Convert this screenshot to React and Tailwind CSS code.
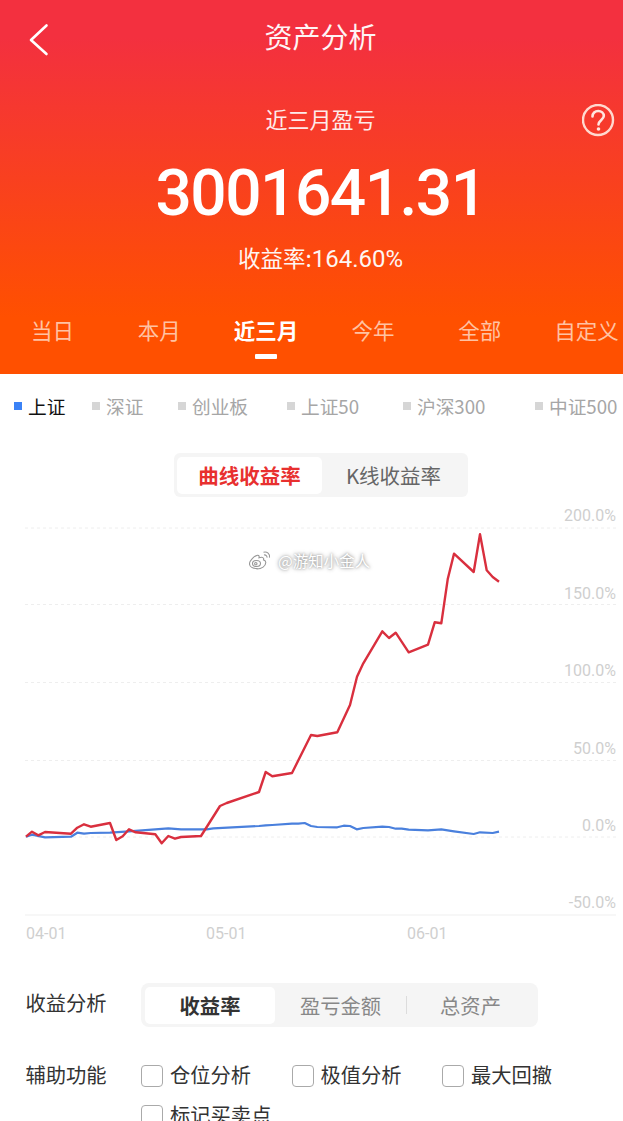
import React from "react";

const CJK = "font-['Noto_Sans_CJK_SC','Noto_Sans',sans-serif]";

const PERIODS = ["当日", "本月", "近三月", "今年", "全部", "自定义"];

// width of each slot keeps the markers spaced like the native scroller
const INDEXES = [
  { name: "上证", width: "w-[78px]", active: true },
  { name: "深证", width: "w-[86px]" },
  { name: "创业板", width: "w-[109px]" },
  { name: "上证50", width: "w-[116px]" },
  { name: "沪深300", width: "w-[132px]" },
  { name: "中证500", width: "w-[88px]" },
];

const GRID_Y = [528, 604.5, 682.5, 760.5, 837];
const Y_LABELS = [
  ["200.0%", 521],
  ["150.0%", 599],
  ["100.0%", 676],
  ["50.0%", 754],
  ["0.0%", 831],
  ["-50.0%", 908],
];
const X_LABELS = [
  ["04-01", 26],
  ["05-01", 206],
  ["06-01", 407],
];

const RED_LINE =
  "26,836.7 32,831.7 38.3,835.3 45,832 71,833.7 77.3,827.7 84,824.3 90.7,826.7 110,823 116.3,840 122.7,836.3 129,829.3 135.7,832.3 155.3,834.3 161.7,843.3 168.3,836 175,838.7 181,837 201,836 220,806 226.7,803 259,792 265.7,772 272.3,776.3 292,773 311,735 317.3,736 337.3,732.3 350,705 357,676.7 363.3,663.3 382.3,631.3 389,638 395.7,632.7 408.7,652.3 428,644.7 434.7,622.3 441.3,623.3 447.7,579.3 454,553.7 473.7,572 480,534.3 486.7,570.3 492.7,577 499,581.7";

const BLUE_LINE =
  "26,836.7 32,834.7 45,837.3 71,836.7 77.3,832.7 84,833.7 90.7,833 110,832.7 129,831.3 155.3,829.3 168.3,828.3 181,829.3 206.7,829.3 213.3,828.3 259,826 265.7,825.3 272.3,825 292,823.7 298.3,823.7 304.7,823 311,826 317.3,827 337.3,827.3 343.7,825.7 350,826 356.7,829.3 363.3,828 382.3,826.7 389,827 395.7,828.7 401.7,828.7 408.7,829.7 428,830.3 441.3,829.3 454,831.3 473.7,834 480,832.3 492.7,833 499,831.7";

const OPTIONS = ["仓位分析", "极值分析", "最大回撤", "标记买卖点"];

const Header = () => (
  <div className="h-[374px] bg-linear-to-b/srgb from-[#f3303f] from-10% to-[#ff5000] to-85% text-white overflow-hidden">
    <div className="relative h-[74px] pl-[18px] pb-[3px] flex items-center justify-center">
      <svg className="absolute left-[28px] top-[23px]" width="22" height="33" viewBox="0 0 22 33" fill="none">
        <path d="M18.500 2.500 3 17l15.500 14" stroke="#fff" strokeWidth="2.600" strokeLinecap="round" strokeLinejoin="round" />
      </svg>
      <span className="text-[28px] leading-none opacity-95">资产分析</span>
    </div>
    <div className="relative mt-[29px] pl-[18px] flex justify-center">
      <span className="text-[22px] leading-[30px] opacity-90">近三月盈亏</span>
      <svg className="absolute left-[582px] top-[1px]" width="33" height="33" viewBox="0 0 33 33" fill="none">
        <circle cx="16" cy="16" r="15" stroke="#ffd9cf" strokeWidth="2.400" />
        <path d="M10.500 12.500c0-3.300 2.500-5.500 5.700-5.500 3.300 0 5.600 2.100 5.600 5 0 3.600-5.300 4.300-5.300 8.500" stroke="#ffe6df" strokeWidth="2.600" strokeLinecap="round" />
        <circle cx="16.500" cy="25" r="1.800" fill="#ffe6df" />
      </svg>
    </div>
    <div className="mt-[25px] pl-[18px] text-center font-['Roboto',sans-serif] font-medium text-[64px] leading-[72px] tracking-[-1.500px]">
      3001641.31
    </div>
    <div className="mt-[11px] pl-[18px] text-center text-[22.500px] leading-[32px] opacity-95">
      收益率:<span className="font-['Roboto',sans-serif] text-[24px]">164.60%</span>
    </div>
    <div className="mt-[40px] -ml-[1px] w-[641px] grid grid-cols-6 text-[21.500px] leading-[30px]">
      {PERIODS.map((p, i) => (
        <div key={p} className="flex flex-col items-center">
          <span className={i === 2 ? "font-bold" : "text-[#ffc2a3]"}>{p}</span>
          <span className={i === 2 ? "mt-[9px] h-[5px] w-[22px] bg-white rounded-[1px]" : "mt-[9px] h-[5px]"} />
        </div>
      ))}
    </div>
  </div>
);

const IndexRow = () => (
  <div className="flex h-[64px] items-center pl-[14px] whitespace-nowrap overflow-hidden">
    {INDEXES.map((item) => (
      <div key={item.name} className={`${item.width} shrink-0 flex items-center gap-[6px]`}>
        <span className={item.active ? "h-[8px] w-[8px] bg-[#3b82f6]" : "h-[8px] w-[8px] bg-[#d6d6d6]"} />
        <span className={item.active ? "text-[18.700px] text-[#111]" : "text-[18.700px] text-[#a6a6a6]"}>{item.name}</span>
      </div>
    ))}
  </div>
);

const ChartTabs = () => (
  <div className="mt-[15px] pl-[174px]">
    <div className="flex h-[44px] w-[294px] items-center rounded-[6px] bg-[#f5f5f5] p-[3px]">
      <div className="flex h-[37px] w-[145px] items-center justify-center rounded-[5px] bg-white text-[20.500px] font-bold text-[#e8302f]">
        曲线收益率
      </div>
      <div className="flex-1 text-center text-[20.500px] text-[#666]">K线收益率</div>
    </div>
  </div>
);

const Chart = () => (
  <div className="relative mt-[8px] h-[440px]">
    <svg className="block" width="623" height="440" viewBox="0 505 623 440" fill="none">
      {GRID_Y.map((y) => (
        <line key={y} x1="25" x2="616" y1={y} y2={y} stroke="#eeeeee" strokeDasharray="3 3" />
      ))}
      <line x1="25" x2="616" y1="915" y2="915" stroke="#efefef" />
      {Y_LABELS.map(([label, y]) => (
        <text key={label} x="616" y={y} textAnchor="end" fontSize="16" fill="#cfcfcf" fontFamily="Roboto, sans-serif">
          {label}
        </text>
      ))}
      {X_LABELS.map(([label, x]) => (
        <text key={label} x={x} y="939" fontSize="16" fill="#cfcfcf" fontFamily="Roboto, sans-serif">
          {label}
        </text>
      ))}
      <polyline points={BLUE_LINE} stroke="#4a80dd" strokeWidth="2.200" strokeLinejoin="round" />
      <polyline points={RED_LINE} stroke="#d92f3e" strokeWidth="2.400" strokeLinejoin="round" />
    </svg>
    {/* weibo handle stamped over the chart */}
    <div className="absolute left-[249px] top-[45px] flex items-center gap-[6px]">
      <svg width="23" height="20" viewBox="0 0 23 20" fill="none" stroke="#989898" strokeWidth="1.100">
        <path d="M8 18.500c-4 0-7.500-1.700-7.500-4.800 0-3 4.700-7.900 8-8.500 1.800-.2 1.800 1.500 1.500 2.500 1.500-.5 4-.8 4.600.7.200.6 0 1.100-.1 1.500 1.500.4 2.300 1.300 2.300 2.700 0 3.400-4.300 6.400-8.800 6.400Z" fill="#fff" />
        <ellipse cx="7.500" cy="13.500" rx="4" ry="3" />
        <circle cx="6.800" cy="13.700" r="1.200" />
        <path d="M14.500 2.200c3.500-1 6.800 1.800 6 5.500M15 5c1.800-.4 3.300 1 3 2.700" />
      </svg>
      <span className="text-[15.500px] leading-[20px] text-white [text-shadow:0_0_4px_#8a8a8a,0_0_2px_#b0b0b0]">@游知小金人</span>
    </div>
  </div>
);

const Controls = () => (
  <div className="mt-[38px] pl-[25.500px] text-[20.300px] text-[#333]">
    <div className="flex items-center">
      <span className="w-[115.500px] leading-[30px] -mt-[6px]">收益分析</span>
      <div className="flex h-[44px] w-[397px] items-center rounded-[8px] bg-[#f5f5f5] p-[4px] text-[#888]">
        <div className="flex h-[37px] w-[130px] items-center justify-center rounded-[5px] bg-white font-bold text-[#333]">
          收益率
        </div>
        <div className="w-[131px] text-center">盈亏金额</div>
        <div className="h-[18px] w-px bg-[#dcdcdc]" />
        <div className="flex-1 text-center">总资产</div>
      </div>
    </div>
    <div className="mt-[32px] flex">
      <span className="w-[115.500px] shrink-0 leading-[30px]">辅助功能</span>
      <div className="grid grid-cols-[150.500px_150.500px_1fr] gap-y-[10px]">
        {OPTIONS.map((o) => (
          <label key={o} className="flex h-[30px] items-center gap-[7px]">
            <span className="h-[22px] w-[22px] mt-[4px] rounded-[4px] border border-[#aaa] bg-white" />
            <span className="leading-[30px]">{o}</span>
          </label>
        ))}
      </div>
    </div>
  </div>
);

const App = () => {
  return (
    <div className={`${CJK} h-[1121px] w-[623px] overflow-hidden bg-white`}>
      <Header />
      <IndexRow />
      <ChartTabs />
      <Chart />
      <Controls />
    </div>
  );
};

export default App;
